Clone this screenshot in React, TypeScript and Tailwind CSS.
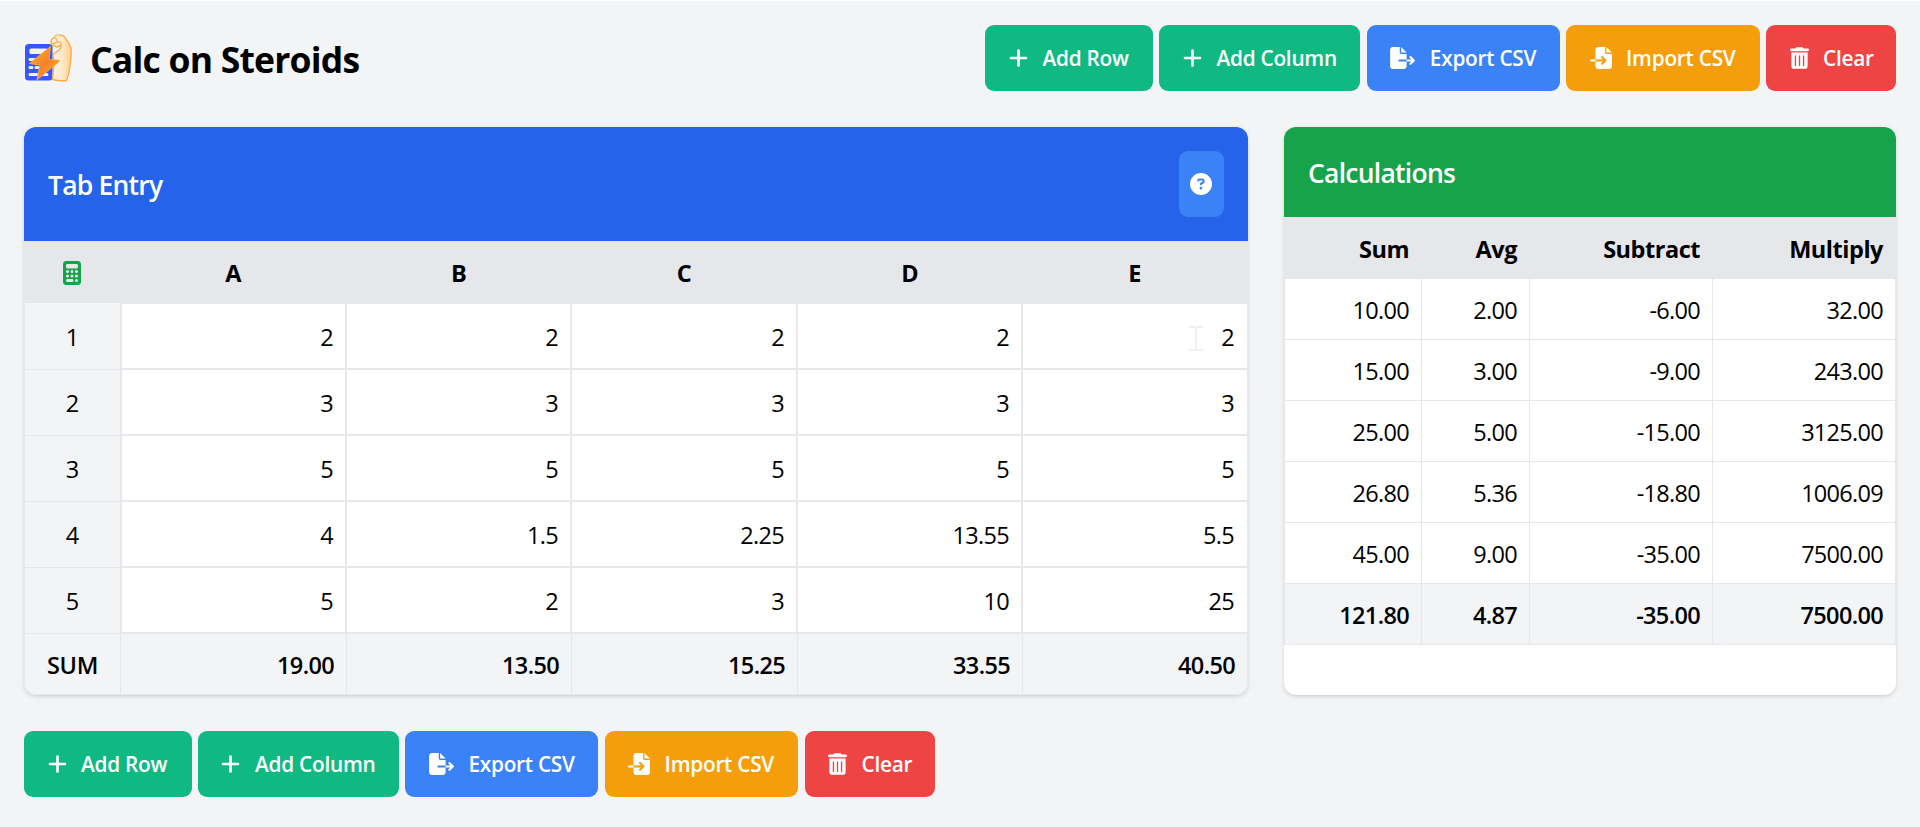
import type { ReactNode } from "react";
import clsx from "clsx";
import {
  FaCalculator,
  FaCircleQuestion,
  FaFileExport,
  FaFileImport,
  FaPlus,
  FaTrashCan,
} from "react-icons/fa6";

const columns = ["A", "B", "C", "D", "E"];

const rows = [
  ["2", "2", "2", "2", "2"],
  ["3", "3", "3", "3", "3"],
  ["5", "5", "5", "5", "5"],
  ["4", "1.5", "2.25", "13.55", "5.5"],
  ["5", "2", "3", "10", "25"],
];

const sums = ["19.00", "13.50", "15.25", "33.55", "40.50"];

const calculations = [
  ["10.00", "2.00", "-6.00", "32.00"],
  ["15.00", "3.00", "-9.00", "243.00"],
  ["25.00", "5.00", "-15.00", "3125.00"],
  ["26.80", "5.36", "-18.80", "1006.09"],
  ["45.00", "9.00", "-35.00", "7500.00"],
];

const totals = ["121.80", "4.87", "-35.00", "7500.00"];

function Logo() {
  return (
    <svg viewBox="0 0 48 48" className="size-12 shrink-0" fill="none">
      <defs>
        <linearGradient id="skin" x1="0" y1="0" x2="1" y2="0">
          <stop offset="0" stopColor="#fff0d8" />
          <stop offset="0.5" stopColor="#ffecd0" />
          <stop offset="1" stopColor="#fdcf8c" />
        </linearGradient>
        <linearGradient id="bolt" x1="0" y1="0" x2="1" y2="1">
          <stop offset="0" stopColor="#ffb52e" />
          <stop offset="0.5" stopColor="#f5822a" />
          <stop offset="1" stopColor="#ffb020" />
        </linearGradient>
      </defs>
      {/* calculator */}
      <rect x="1" y="10" width="27.5" height="36.5" rx="3.5" fill="#3658fa" />
      <rect x="5.5" y="14.500" width="18" height="5.500" rx="1.5" fill="#f3f4f6" />
      <path
        d="M6 25.500h4M6 33.500h2M12 33.500h2M18 33.500h2M6 40.500h8M18 40.500h5"
        stroke="#eef1ff"
        strokeWidth="3"
        strokeLinecap="round"
      />
      {/* flexed arm */}
      <path
        d="M27.500 9.500c-1-2.500 0-5 2.500-6 1.500-2.500 4.500-3.300 7-2 2-.3 3.500 1 4.500 3 2.500 3 4.500 6 5.500 9.500.3 6 0 12-1 18-.5 5-1.500 10-3.500 14.500-4.500.6-9 .2-14-1l1.500-15.500-1-9c1-2.500 4-3 6-5 1.500-1.500 2.500-3 2-5-2 1.500-5 2-6.500 1-1.500-.3-2.500-1.500-3-3.500z"
        fill="url(#skin)"
        stroke="#fbab44"
        strokeWidth="1.3"
        strokeLinejoin="round"
      />
      <path
        d="M30 4c2 0 3.500 1.500 3 3.500M29 9.500c3 0 4-2 6.500-1.500 1.500.3 2 1.500 1.500 3"
        stroke="#fbab44"
        strokeWidth="1.1"
        strokeLinecap="round"
      />
      {/* lightning */}
      <path
        d="M26.500 12.500 5.500 29.500l10.500 1.500L13 46 36 26.500l-11-1z"
        fill="url(#bolt)"
        stroke="#ffa62b"
        strokeWidth="1"
        strokeLinejoin="round"
      />
    </svg>
  );
}

type ActionProps = {
  className: string;
  icon: ReactNode;
  children: ReactNode;
};

function Action({ className, icon, children }: ActionProps) {
  return (
    <button
      className={clsx(
        "flex h-[66px] shrink-0 items-center gap-[14.5px] rounded-[9px] pl-[23.5px] text-[20.8px] font-semibold tracking-[-0.012em] whitespace-nowrap text-white",
        className,
      )}
    >
      {icon}
      <span className="pt-0.5">{children}</span>
    </button>
  );
}

function Actions() {
  return (
    <div className="flex gap-[6.4px]">
      <Action className="w-[167.6px] bg-[#10b981]" icon={<FaPlus className="h-[22px] w-[19px]" />}>
        Add Row
      </Action>
      <Action className="w-[201px] bg-[#10b981]" icon={<FaPlus className="h-[22px] w-[19px]" />}>
        Add Column
      </Action>
      <Action className="w-[192.8px] bg-[#3b82f6]" icon={<FaFileExport className="h-[22px] w-[25px]" />}>
        Export CSV
      </Action>
      <Action className="w-[193.6px] bg-[#f59e0b]" icon={<FaFileImport className="size-[22px]" />}>
        Import CSV
      </Action>
      <Action className="w-[130px] bg-[#ef4444]" icon={<FaTrashCan className="h-[22px] w-[19px]" />}>
        Clear
      </Action>
    </div>
  );
}

function TabEntry() {
  return (
    <section className="w-[1224px] overflow-hidden rounded-xl bg-white shadow-[0_1.5px_4.5px_rgba(0,0,0,0.1),0_1.5px_3px_-1.5px_rgba(0,0,0,0.1)]">
      <div className="flex h-[114px] items-center justify-between bg-[#2563eb] px-6 text-white">
        <h2 className="pt-1 text-[26.5px] font-semibold tracking-[-0.03em]">Tab Entry</h2>
        <button className="flex h-[66px] w-[45px] items-center justify-center rounded-[9px] bg-[#3b82f6] pr-px">
          <FaCircleQuestion className="size-[22px]" />
        </button>
      </div>

      <table className="w-full table-fixed border-separate border-spacing-0 text-[23.5px] tracking-[-0.03em]">
        <colgroup>
          <col className="w-[97px]" />
          <col className="w-[226px]" />
          <col className="w-[225px]" />
          <col className="w-[226px]" />
          <col className="w-[225px]" />
          <col className="w-[225px]" />
        </colgroup>
        <thead>
          <tr className="h-[62px] bg-[#e5e7eb]">
            <th className="p-0 pt-0.5 pr-px">
              <FaCalculator className="mx-auto h-6 w-[18px] text-[#16a34a]" />
            </th>
            {columns.map((name) => (
              <th key={name} className="p-0 pt-1 pr-0.5 font-bold">
                {name}
              </th>
            ))}
          </tr>
        </thead>
        <tbody>
          {rows.map((row, r) => (
            <tr key={r} className={r === 0 ? "h-[67px]" : "h-[66px]"}>
              <td className="border-x border-b border-[#e5e7eb] bg-[#f3f4f6] p-0 pt-[3px] pr-px text-center">
                {r + 1}
              </td>
              {row.map((value, c) => (
                <td
                  key={c}
                  className={clsx(
                    "relative border-b-2 border-[#e5e7eb] p-0 pt-1 text-right",
                    r === 0 && "border-t",
                    c === 0 && "border-l",
                    c === 4 ? "border-r pr-[13px]" : "border-r-2 pr-3",
                  )}
                >
                  {value}
                  {/* text cursor */}
                  {r === 0 && c === 4 && (
                    <svg
                      viewBox="0 0 14 25"
                      className="absolute top-[22px] right-[44px] h-[25px] w-[14px]"
                      fill="#f0f0f0"
                    >
                      <path d="M0 0h6v2H0zM8 0h6v2H8zM6 1h2v23H6zM0 23h6v2H0zM8 23h6v2H8z" />
                    </svg>
                  )}
                </td>
              ))}
            </tr>
          ))}
          <tr className="h-[61px] bg-[#f3f4f6] font-semibold tracking-[-0.028em]">
            <td className="rounded-bl-xl border-x border-b border-[#e5e7eb] p-0 pt-[3px] text-center tracking-[-0.015em]">
              SUM
            </td>
            {sums.map((value, c) => (
              <td
                key={c}
                className={clsx(
                  "border-r border-b border-[#e5e7eb] p-0 pt-[3px] pr-3 text-right",
                  c === 4 && "rounded-br-xl",
                )}
              >
                {value}
              </td>
            ))}
          </tr>
        </tbody>
      </table>
    </section>
  );
}

function Calculations() {
  return (
    <section className="w-[612px] overflow-hidden rounded-xl bg-white shadow-[0_1.5px_4.5px_rgba(0,0,0,0.1),0_1.5px_3px_-1.5px_rgba(0,0,0,0.1)]">
      <div className="flex h-[90px] items-center bg-[#16a34a] px-6 text-white">
        <h2 className="pt-1 text-[26.5px] font-semibold tracking-[-0.028em]">Calculations</h2>
      </div>

      <table className="w-full table-fixed border-separate border-spacing-0 text-right text-[23.5px] tracking-[-0.03em]">
        <colgroup>
          <col className="w-[138px]" />
          <col className="w-[108px]" />
          <col className="w-[183px]" />
          <col className="w-[183px]" />
        </colgroup>
        <thead>
          <tr className="h-[62px] bg-[#e5e7eb] font-bold tracking-[-0.02em]">
            <th className="p-0 pt-1 pr-[13px]">Sum</th>
            <th className="p-0 pt-1 pr-[13px]">Avg</th>
            <th className="p-0 pt-1 pr-[13px]">Subtract</th>
            <th className="p-0 pt-1 pr-[13px]">Multiply</th>
          </tr>
        </thead>
        <tbody>
          {[...calculations, totals].map((row, r) => (
            <tr
              key={r}
              className={clsx("h-[61px]", r === 5 && "bg-[#f3f4f6] font-semibold tracking-[-0.028em]")}
            >
              {row.map((value, c) => (
                <td
                  key={c}
                  className={clsx(
                    "border-r border-b border-[#e5e7eb] p-0 pt-1 pr-3",
                    c === 0 && "border-l",
                  )}
                >
                  {value}
                </td>
              ))}
            </tr>
          ))}
        </tbody>
      </table>
    </section>
  );
}

export default function App() {
  return (
    <main className="h-[827px] border-t border-white bg-[#f3f4f6] px-6 pt-6 font-['Open_Sans','Noto_Sans',sans-serif] text-black">
      {/* Title and actions */}
      <header className="flex h-[66px] items-center justify-between">
        <div className="flex items-center gap-[18px]">
          <Logo />
          <h1 className="pt-1 text-[35.5px] leading-none font-bold tracking-[-0.022em]">Calc on Steroids</h1>
        </div>
        <Actions />
      </header>

      {/* Tables */}
      <div className="mt-9 flex h-[568px] justify-between">
        <TabEntry />
        <Calculations />
      </div>

      {/* Repeated actions under the tables */}
      <div className="mt-9">
        <Actions />
      </div>
    </main>
  );
}
